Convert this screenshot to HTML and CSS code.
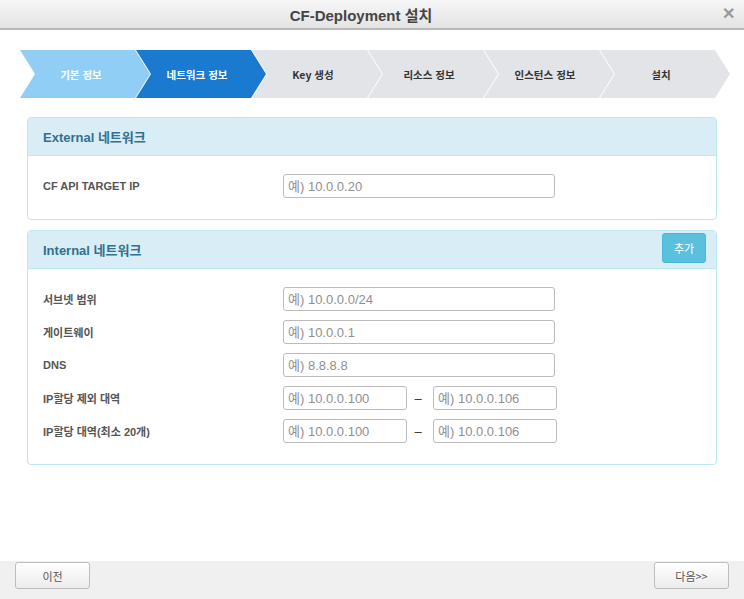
FILE: index.html
```html
<!DOCTYPE html>
<html lang="ko">
<head>
<meta charset="utf-8">
<title>CF-Deployment 설치</title>
<link rel="stylesheet" href="styles.css">
</head>
<body>
<div class="dialog">
  <header class="titlebar">
    <span class="title">CF-Deployment 설치</span>
    <span class="close">✕</span>
  </header>
  <main class="content">
    <ol class="steps">
      <li class="step done">기본 정보</li>
      <li class="step active">네트워크 정보</li>
      <li class="step">Key 생성</li>
      <li class="step">리소스 정보</li>
      <li class="step">인스턴스 정보</li>
      <li class="step">설치</li>
    </ol>

    <section class="panel">
      <div class="panel-head"><h2>External 네트워크</h2></div>
      <div class="panel-body form">
        <label>CF API TARGET IP</label>
        <input class="field" placeholder="예) 10.0.0.20">
      </div>
    </section>

    <section class="panel">
      <div class="panel-head"><h2>Internal 네트워크</h2><button class="btn-add">추가</button></div>
      <div class="panel-body form">
        <label>서브넷 범위</label>
        <input class="field" placeholder="예) 10.0.0.0/24">
        <label>게이트웨이</label>
        <input class="field" placeholder="예) 10.0.0.1">
        <label>DNS</label>
        <input class="field" placeholder="예) 8.8.8.8">
        <label>IP할당 제외 대역</label>
        <div class="range"><input class="field short" placeholder="예) 10.0.0.100"><span class="dash">–</span><input class="field short" placeholder="예) 10.0.0.106"></div>
        <label>IP할당 대역(최소 20개)</label>
        <div class="range"><input class="field short" placeholder="예) 10.0.0.100"><span class="dash">–</span><input class="field short" placeholder="예) 10.0.0.106"></div>
      </div>
    </section>
  </main>
  <footer class="footer">
    <button class="btn">이전</button>
    <button class="btn">다음&gt;&gt;</button>
  </footer>
</div>
</body>
</html>
```

FILE: styles.css
```css
* { box-sizing: border-box; }
html, body { margin: 0; padding: 0; background: #fff; }
body {
  font-family: "Liberation Sans", Arial, "Noto Sans CJK KR", sans-serif;
  color: #333;
}
.dialog {
  width: 744px;
  height: 599px;
  display: flex;
  flex-direction: column;
}
.titlebar {
  height: 30px;
  flex: none;
  background: linear-gradient(#f7f7f7, #e3e3e3);
  border-bottom: 2px solid #b9b9b9;
  display: flex;
  align-items: center;
  justify-content: center;
  position: relative;
}
.title {
  font-size: 15px;
  font-weight: bold;
  color: #444;
  margin-left: -22px;
}
.close {
  position: absolute;
  right: 9px;
  top: 4px;
  font-size: 16px;
  font-weight: bold;
  color: #9a9a9a;
}
.content {
  flex: 1;
}
.steps {
  list-style: none;
  margin: 20px 0 0 0;
  padding: 0 0 0 20px;
  display: flex;
  height: 48px;
}
.step {
  width: 130px;
  height: 48px;
  flex: none;
  margin-left: -14px;
  background: #e2e4e8;
  clip-path: polygon(0 0, 115px 0, 130px 50%, 115px 100%, 0 100%, 15px 50%);
  display: flex;
  align-items: center;
  justify-content: center;
  padding-right: 8px;
  font-family: "Noto Sans CJK KR", sans-serif;
  font-size: 10.5px;
  font-weight: bold;
  color: #333;
}
.step:first-child { margin-left: 0; }
.step.done { background: #90cef6; color: #fff; }
.step.active { background: #1a7ad0; color: #fff; }

.panel {
  margin: 0 27px;
  border: 1px solid #bce8f1;
  border-radius: 4px;
  background: #fff;
}
.steps + .panel { margin-top: 19px; }
.panel + .panel { margin-top: 10px; }
.panel-head {
  height: 38px;
  background: #d9edf7;
  border-bottom: 1px solid #bce8f1;
  border-radius: 3px 3px 0 0;
  display: flex;
  align-items: center;
  justify-content: space-between;
  padding: 0 10px 0 15px;
}
.panel-head h2 {
  margin: 0;
  font-size: 13px;
  font-weight: bold;
  color: #31708f;
}
.btn-add {
  align-self: flex-start;
  margin-top: 2px;
  width: 44px;
  height: 30px;
  background: #5bc0de;
  border: 1px solid #46b8da;
  border-radius: 3px;
  color: #fff;
  font-family: "Noto Sans CJK KR", sans-serif;
  font-size: 11px;
  padding: 0;
}
.panel-body {
  padding: 18px 15px 21px 15px;
}
.form {
  display: grid;
  grid-template-columns: 240px auto;
  grid-auto-rows: 24px;
  row-gap: 9px;
  align-items: center;
}
.form label {
  font-size: 11px;
  font-weight: bold;
  color: #555;
}
.field {
  width: 272px;
  height: 24px;
  border: 1px solid #bbb;
  border-radius: 3px;
  padding: 0 4px;
  font-family: "Liberation Sans", Arial, "Noto Sans CJK KR", sans-serif;
  font-size: 13px;
  color: #333;
  outline: none;
}
.field::placeholder { color: #8f8f8f; }
.field.short { width: 124px; }
.range {
  display: flex;
  align-items: center;
}
.dash {
  width: 26px;
  text-align: center;
  padding-right: 4px;
  font-size: 13px;
  color: #333;
}
.footer {
  flex: none;
  height: 38px;
  background: #f0f0f0;
  display: flex;
  justify-content: space-between;
  align-items: flex-start;
  padding: 1px 15px 0 15px;
}
.btn {
  width: 75px;
  height: 27px;
  background: linear-gradient(#ffffff, #ececec);
  border: 1px solid #bdbdbd;
  border-radius: 3px;
  font-family: "Noto Sans CJK KR", sans-serif;
  font-size: 11px;
  color: #555;
  padding: 0;
}
```
